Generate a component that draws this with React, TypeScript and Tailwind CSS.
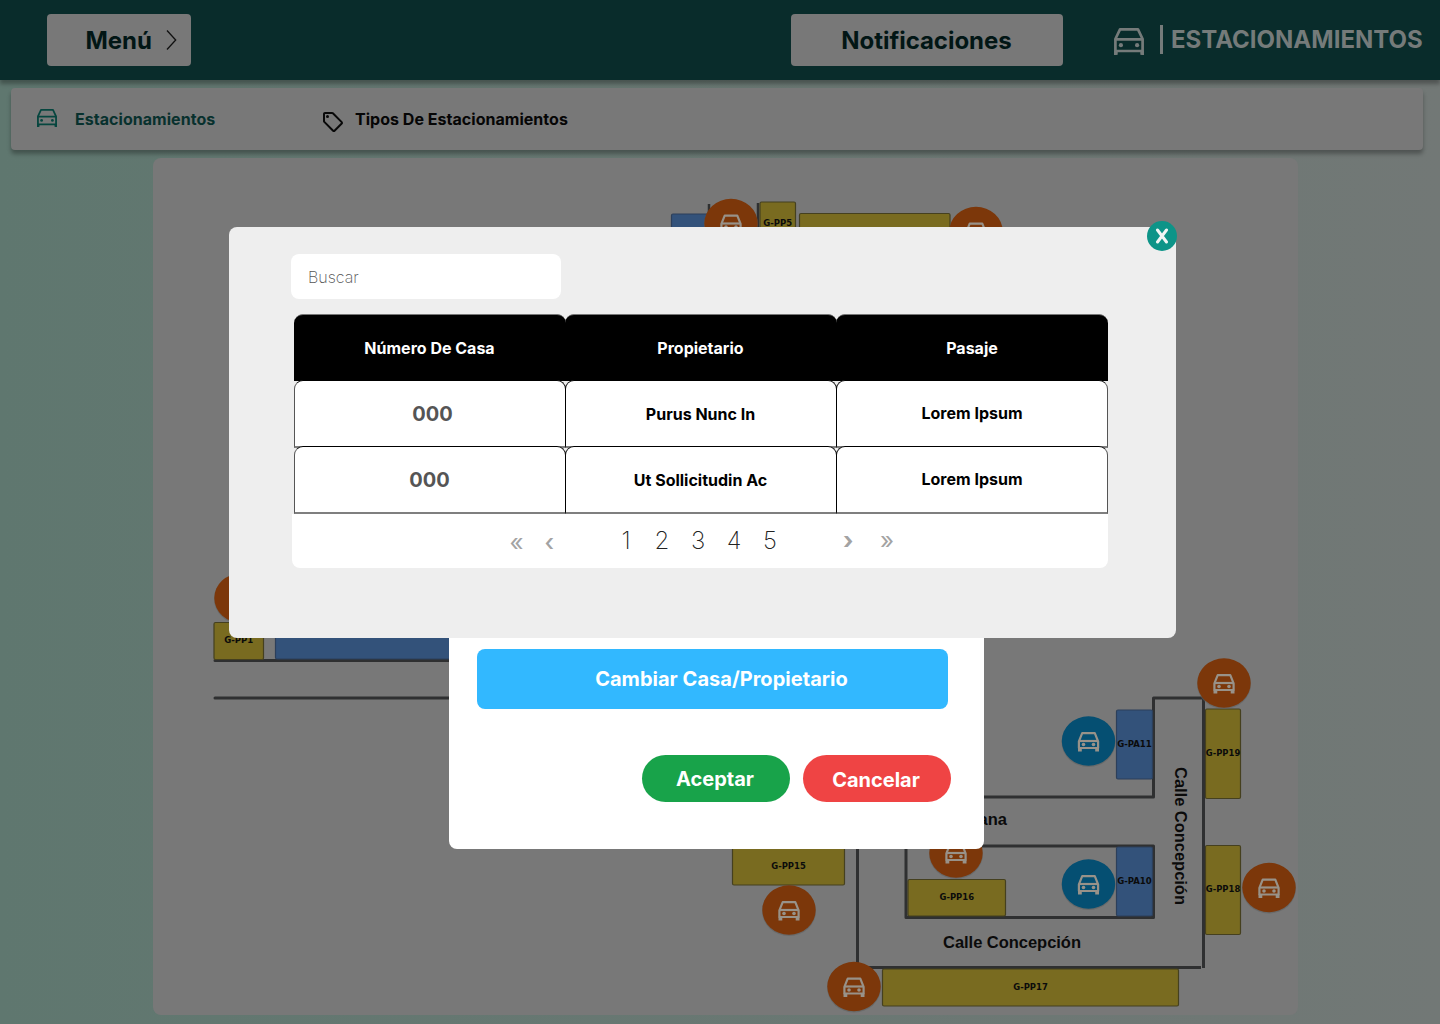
import { MdOutlineSell } from "react-icons/md";

type Spot = { x: number; y: number; w: number; h: number; kind: "y" | "b"; label?: string; ly?: number };

const spots: Spot[] = [
  { x: 671.5, y: 214, w: 60, h: 40, kind: "b" },
  { x: 760, y: 202, w: 35.5, h: 60, kind: "y", label: "G-PP5", ly: 226 },
  { x: 799.5, y: 213.5, w: 150.5, h: 40, kind: "y" },
  { x: 214, y: 622.5, w: 49.5, h: 37, kind: "y", label: "G-PP1", ly: 643 },
  { x: 275.5, y: 600, w: 300, h: 59, kind: "b" },
  { x: 1116.5, y: 710, w: 36, h: 69, kind: "b", label: "G-PA11", ly: 746.5 },
  { x: 1205.5, y: 709, w: 35, h: 89.5, kind: "y", label: "G-PP19", ly: 756 },
  { x: 1116.5, y: 847, w: 36, h: 69, kind: "b", label: "G-PA10", ly: 884 },
  { x: 1205.5, y: 845.5, w: 35, h: 89, kind: "y", label: "G-PP18", ly: 892 },
  { x: 732.5, y: 830, w: 112, h: 55, kind: "y", label: "G-PP15", ly: 869 },
  { x: 908, y: 879.5, w: 97.5, h: 36.5, kind: "y", label: "G-PP16", ly: 900 },
  { x: 882.5, y: 969, w: 296, h: 37, kind: "y", label: "G-PP17", ly: 990 },
];

const pins = [
  { x: 731, y: 223.5, c: "o" },
  { x: 976, y: 231.5, c: "o" },
  { x: 241, y: 598, c: "o" },
  { x: 1224, y: 683, c: "o" },
  { x: 1088.5, y: 741, c: "b" },
  { x: 1088.5, y: 884, c: "b" },
  { x: 1269, y: 887.5, c: "o" },
  { x: 956, y: 853, c: "o" },
  { x: 789, y: 910, c: "o" },
  { x: 854, y: 986.5, c: "o" },
];

function Pin({ x, y, c }: { x: number; y: number; c: string }) {
  return (
    <g transform={`translate(${x} ${y})`}>
      <ellipse cy="1" rx="27" ry="25" fill="#5f6060" opacity="0.6" />
      <ellipse rx="26.700" ry="24.700" fill={c === "o" ? "#7c370a" : "#054f72"} />
      <g transform="translate(0 0.300)">
        <g fill="none" stroke="#989289" strokeWidth="2.200" strokeLinejoin="round">
          <path d="M-9.600 0 L-6.300 -8.200 H6.300 L9.600 0 V6.700 H-9.600 Z" />
          <path d="M-9.600 -0.300 H9.600" />
          <path d="M-8.600 6.500 V10.300 M8.600 6.500 V10.300" strokeWidth="3.800" />
        </g>
        <circle cx="-5" cy="3.200" r="1.800" fill="#989289" />
        <circle cx="5" cy="3.200" r="1.800" fill="#989289" />
      </g>
    </g>
  );
}

function CarIcon({ className }: { className: string }) {
  return (
    <svg className={className} viewBox="0 0 30 27" fill="none" stroke="currentColor" strokeWidth="2.700" strokeLinejoin="round">
      <path d="M1.400 27 V11 L6 1.400 H24 L28.600 11 V27" />
      <path d="M1.400 11.400 H28.600 M1.400 23 H28.600" />
      <path d="M1.900 23 V26.700 M28.100 23 V26.700" strokeWidth="3.600" />
      <circle cx="6.900" cy="17.200" r="2.100" fill="currentColor" stroke="none" />
      <circle cx="23.100" cy="17.200" r="2.100" fill="currentColor" stroke="none" />
    </svg>
  );
}

function ParkingMap() {
  return (
    <svg className="block h-full w-full" viewBox="153 158 1145 857" fontFamily="Liberation Sans, Arial, sans-serif" fontWeight="700" fill="#0b0b0b">
      <g fill="none" stroke="#2f3031" strokeWidth="3">
        <path d="M709 204V250M758 203V250" strokeWidth="2.500" />
        <path d="M215 660.500H600M215 698H600" strokeLinecap="round" />
        <path d="M980 797H1153.500V698H1203.500V968" strokeLinejoin="round" />
        <path d="M857.500 840V967.500H1201" />
        <path d="M906 846H1153.500V917.500H906Z" strokeLinejoin="round" />
      </g>
      {spots.map((s, i) => (
        <rect key={i} x={s.x} y={s.y} width={s.w} height={s.h} rx="1.500" fill={s.kind === "y" ? "#796b20" : "#33527a"} stroke={s.kind === "y" ? "#45401f" : "#2c3f5a"} strokeWidth="1.200" />
      ))}
      {spots.map((s, i) =>
        s.label ? (
          <text key={i} x={s.x + s.w / 2} y={s.ly} textAnchor="middle" fontFamily="DejaVu Sans, sans-serif" fontWeight="700" fontSize="9.200" textLength={s.label.length === 5 ? 29 : 34.5} lengthAdjust="spacingAndGlyphs">
            {s.label}
          </text>
        ) : null,
      )}
      <text x="943" y="948" fontSize="16.500" textLength="138">Calle Concepción</text>
      <text x="1007" y="825" fontSize="16.500" textAnchor="end">Fontana</text>
      <text transform="translate(1175 767) rotate(90)" fontSize="16.500" textLength="138">Calle Concepción</text>
      {pins.map((p, i) => (
        <Pin key={i} {...p} />
      ))}
    </svg>
  );
}

const rows = [
  ["000", "Purus Nunc In", "Lorem Ipsum"],
  ["000", "Ut Sollicitudin Ac", "Lorem Ipsum"],
];

export default function App() {
  return (
    <div className="relative flex h-[1024px] w-[1440px] flex-col overflow-hidden bg-linear-to-r from-[#5f776f] to-[#727876] font-['Inter',sans-serif]">
      <header className="flex h-20 shrink-0 items-center bg-[#092c2b] shadow-[0_4px_4px_rgba(0,0,0,0.3)]">
        <button className="ml-[47px] flex h-[52px] w-36 items-center rounded bg-[#787878] pl-[38.5px] text-2xl font-bold text-[#021615]">
          <span className="w-[80px] pt-[2px] text-left tracking-[-0.04px]">Menú</span>
          <svg className="h-5 w-3" viewBox="0 0 12 20" fill="none" stroke="#111" strokeWidth="1.3">
            <path d="M1 0.500 L9.700 10 L1 19.500" />
          </svg>
        </button>
        <button className="ml-[600px] h-[52px] w-[272px] rounded bg-[#787878] pt-[2px] pr-px text-2xl font-bold tracking-[-0.04px] text-[#021615]">Notificaciones</button>
        <div className="ml-[51px] flex items-center text-[#757b7a]">
          <CarIcon className="mt-[3px] h-[27px] w-[30px]" />
          <span className="mb-px ml-[16px] h-[29px] w-[3px] bg-[#757b7a]" />
          <span className="ml-2 text-2xl font-bold">ESTACIONAMIENTOS</span>
        </div>
      </header>

      <nav className="mt-2 ml-[11px] flex h-[62px] w-[1412px] shrink-0 items-center rounded bg-[#787878] text-base font-bold shadow-[0_4px_4px_rgba(0,0,0,0.3)]">
        <CarIcon className="mb-[2px] ml-[26px] h-[18px] w-5 text-[#06463f]" />
        <span className="ml-[18px] w-[246px] tracking-[0.04px] text-[#08312e]">Estacionamientos</span>
        <MdOutlineSell className="mt-[5px] text-[#080808]" size={24} />
        <span className="ml-[10px] tracking-[0.03px] text-[#060606]">Tipos De Estacionamientos</span>
      </nav>

      <main className="mt-2 ml-[153px] h-[857px] w-[1145px] shrink-0 rounded-lg bg-[#787878]">
        <ParkingMap />
      </main>

      <section className="absolute top-[560px] left-[449px] flex h-[289px] w-[535px] flex-col rounded-lg bg-white pt-[89px] pl-7 text-xl font-bold text-white">
        <button className="h-[60px] w-[471px] rounded-lg bg-[#32b8ff] pl-[18px] tracking-[0.03px]">Cambiar Casa/Propietario</button>
        <div className="mt-[46px] ml-[165px] flex gap-[13px]">
          <button className="h-[47px] w-[148px] rounded-full bg-[#18a34a] pr-[2px]">Aceptar</button>
          <button className="h-[47px] w-[148px] rounded-full bg-[#ef4444] pt-[2px] pr-[2px]">Cancelar</button>
        </div>
      </section>

      <section className="absolute top-[227px] left-[229px] h-[411px] w-[947px] rounded-lg bg-[#eeeeee] pt-[27px] pl-[62px]">
        <button className="absolute -top-[6px] -right-px flex h-[30px] w-[30px] items-center justify-center rounded-full bg-[#0d9488]" aria-label="Cerrar">
          <svg className="h-4 w-3.5" viewBox="0 0 14 16" fill="none" stroke="#f1f5f4" strokeWidth="3" strokeLinecap="round">
            <path d="M2.500 2 L11.500 14 M11.500 2 L2.500 14" />
          </svg>
        </button>
        <input className="block h-[45px] w-[270px] rounded-lg bg-white pt-px pb-px pl-[17px] text-base font-extralight placeholder:text-[#555]" placeholder="Buscar" />
        <div className="mt-[15px] ml-[3px] w-[814px]">
          <div className="grid h-[67px] grid-cols-[272px_271px_271px] text-center text-base font-bold text-white">
            {["Número De Casa", "Propietario", "Pasaje"].map((t) => (
              <div key={t} className="-ml-px flex items-center justify-center rounded-t-[9px] border-t border-[#777] bg-black pr-px first:ml-0 last:pr-0">
                {t}
              </div>
            ))}
          </div>
          {rows.map((r, i) => (
            <div key={i} className="-mt-px grid h-[68px] grid-cols-[272px_271px_271px] font-bold text-black last:-mt-[2px]">
              <div className={`flex items-center justify-center rounded-t-[9px] border border-b-2 border-black border-b-[#7f7f7f] border-l-[#555] bg-white text-xl text-[#555] ${i ? "pr-px" : "pl-[5px]"}`}>{r[0]}</div>
              <div className="-ml-px flex items-center justify-center rounded-t-[9px] border border-b-2 border-black border-b-[#7f7f7f] bg-white pt-px pr-px text-base">{r[1]}</div>
              <div className="-ml-px flex items-center justify-center rounded-t-[9px] border border-b-2 border-black border-r-[#555] border-b-[#7f7f7f] bg-white pb-px text-base">{r[2]}</div>
            </div>
          ))}
        </div>
        <div className="ml-px flex h-[54px] w-[816px] items-center rounded-b-lg bg-white text-2xl font-extralight text-[#222]">
          <span className="mt-1 ml-[217.5px] w-[35px] font-normal text-[#a3a3a3]">«</span>
          <span className="mt-1 w-[63.5px] font-medium text-[#a3a3a3]">‹</span>
          <div className="flex">
            {["1", "2", "3", "4", "5"].map((n) => (
              <span key={n} className="w-9 text-center">{n}</span>
            ))}
          </div>
          <span className="ml-[55px] w-[37px] font-bold text-[#a3a3a3]">›</span>
          <span className="font-normal text-[#a3a3a3]">»</span>
        </div>
      </section>
    </div>
  );
}
